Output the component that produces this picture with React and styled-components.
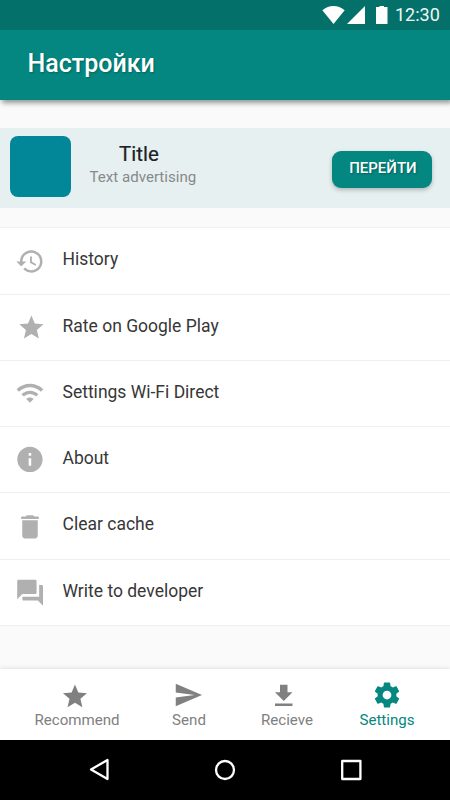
import React from 'react';
import styled, { createGlobalStyle } from 'styled-components';

const GlobalStyle = createGlobalStyle`
  * {
    box-sizing: border-box;
  }

  body {
    margin: 0;
    background: #fafafa;
    font-family: Roboto, 'Liberation Sans', sans-serif;
  }
`;

const Screen = styled.div`
  width: 450px;
  height: 800px;
  display: flex;
  flex-direction: column;
  background: #fafafa;
  overflow: hidden;
`;

const StatusBar = styled.div`
  height: 30px;
  flex-shrink: 0;
  display: flex;
  justify-content: flex-end;
  padding-right: 10px;
  background: #04706a;
  color: #fff;
`;

const StatusIcons = styled.svg`
  width: 68px;
  height: 30px;
  margin-right: 6.5px;
  fill: #fff;
`;

const Clock = styled.span`
  width: 45px;
  font-size: 18px;
  line-height: 30px;
  color: #f0f7f6;
  white-space: nowrap;
`;

const AppBar = styled.header`
  height: 70px;
  flex-shrink: 0;
  padding-left: 27.5px;
  background: #048780;
  box-shadow: 2px 3px 5px rgba(0, 0, 0, 0.4);
  clip-path: inset(0 0 -12px 0);
`;

const PageTitle = styled.h1`
  margin: 0;
  font-size: 25px;
  font-weight: 500;
  line-height: 67px;
  color: #fff;
  text-shadow: 1px 1px 2px rgba(0, 0, 0, 0.25);
`;

const Banner = styled.section`
  height: 80px;
  flex-shrink: 0;
  margin: 28px 0 20.4px;
  padding: 0 18px 0 10px;
  display: flex;
  align-items: flex-start;
  background: #e7f0f1;
`;

const Thumb = styled.div`
  width: 61px;
  height: 61px;
  margin-top: 8.4px;
  border-radius: 8px;
  background: #018798;
`;

const BannerText = styled.div`
  margin: 14px auto 0 18.5px;
`;

const BannerTitle = styled.h2`
  margin: 0 0 0 29.5px;
  font-size: 20.5px;
  font-weight: 400;
  line-height: 24px;
  color: #212121;
  -webkit-text-stroke: 0.2px #212121;
`;

const BannerCaption = styled.p`
  margin: 2px 0 0;
  font-size: 15.1px;
  line-height: 18px;
  color: #868a8a;
`;

const GoButton = styled.button`
  width: 100px;
  height: 37px;
  margin-top: 23.3px;
  margin-right: -0.4px;
  padding: 0 0 4px 1px;
  border: 0;
  border-radius: 9px;
  background: #048780;
  box-shadow: 0 2px 4px rgba(0, 0, 0, 0.25);
  font-family: inherit;
  font-size: 15px;
  font-weight: 500;
  color: #fff;
  text-shadow: 1px 1px 2px rgba(0, 0, 0, 0.3);
`;

const List = styled.ul`
  margin: 0;
  padding: 0;
  list-style: none;
  box-shadow: 0 -1px 0 #f2f2f2;
`;

const ListRow = styled.li`
  height: 66.25px;
  display: flex;
  align-items: center;
  padding-left: 15px;
  background: #fff;
  border-bottom: 1px solid #efefef;
`;

const RowIcon = styled.svg`
  width: 31px;
  height: 31px;
  margin-right: 16.5px;
  overflow: visible;
  fill: #b0b0b0;
`;

const RowLabel = styled.span`
  padding-bottom: 3.4px;
  font-size: 17.5px;
  color: #373737;
`;

const BottomNav = styled.nav`
  height: 71px;
  flex-shrink: 0;
  margin-top: auto;
  padding: 0 20px 0 30px;
  display: flex;
  background: #fff;
  box-shadow: 0 -1px 4px rgba(0, 0, 0, 0.1);
`;

const NavItem = styled.a`
  width: ${({ $width }) => $width}px;
  margin-left: ${({ $gap }) => $gap || 0}px;
  padding-top: 11px;
  display: flex;
  flex-direction: column;
  align-items: center;
  color: ${({ $active }) => ($active ? '#048780' : '#808080')};
  font-size: 15.1px;
  line-height: 18px;
`;

const NavIcon = styled.svg`
  width: 30px;
  height: 30px;
  margin-bottom: 1px;
  fill: currentColor;
`;

const SystemBar = styled.div`
  height: 60px;
  flex-shrink: 0;
  display: flex;
  align-items: center;
  justify-content: center;
  gap: 96px;
  background: #000;
`;

const SystemIcon = styled.svg`
  width: 30px;
  height: 30px;
  fill: none;
  stroke: #fff;
  stroke-width: 2.3;
  stroke-linejoin: round;
`;

const STAR = 'M12 17.27L18.18 21l-1.64-7.03L22 9.24l-7.19-.61L12 2 9.19 8.63 2 9.24l5.46 4.73L5.82 21z';

const rows = [
  {
    label: 'History',
    viewBox: '0 -0.3 24.8 24.8',
    path: 'M13 3c-4.97 0-9 4.03-9 9H1l3.89 3.89.07.14L9 12H6c0-3.87 3.13-7 7-7s7 3.13 7 7-3.13 7-7 7c-1.93 0-3.68-.79-4.94-2.06l-1.42 1.42C8.27 19.99 10.51 21 13 21c4.97 0 9-4.03 9-9s-4.03-9-9-9zm-1 5v5l4.28 2.54.72-1.21-3.5-2.08V8H12z',
  },
  { label: 'Rate on Google Play', viewBox: '-1.6 -0.9 25.7 25.7', path: STAR },
  {
    label: 'Settings Wi-Fi Direct',
    viewBox: '-0.3 -0.3 25.5 25.5',
    path: 'M1 9l2 2c4.97-4.97 13.03-4.97 18 0l2-2C16.93 2.93 7.08 2.93 1 9zm8 8l3 3 3-3c-1.65-1.66-4.34-1.66-6 0zm-4-4l2 2c2.76-2.76 7.24-2.76 10 0l2-2C15.14 9.14 8.87 9.14 5 13z',
  },
  {
    label: 'About',
    viewBox: '0.2 -0.2 24.5 24.5',
    path: 'M12 2C6.48 2 2 6.48 2 12s4.48 10 10 10 10-4.48 10-10S17.52 2 12 2zm1 15h-2v-6h2v6zm0-8h-2V7h2v2z',
  },
  {
    label: 'Clear cache',
    viewBox: '0.4 -0.2 24 24',
    path: 'M6 19c0 1.1.9 2 2 2h8c1.1 0 2-.9 2-2V7H6v12zM18.3 4h-2.8c-.6-.7-1.2-1-2-1h-3c-.8 0-1.4.3-2 1H5.7c-.9 0-.9 2 0 2h12.6c.9 0 .9-2 0-2z',
  },
  {
    label: 'Write to developer',
    viewBox: '0.3 -0.2 24 24',
    path: 'M21 6h-2v9H6v2c0 .55.45 1 1 1h11l4 4V7c0-.55-.45-1-1-1zm-4 6V3c0-.55-.45-1-1-1H3c-.55 0-1 .45-1 1v14l4-4h10c.55 0 1-.45 1-1z',
  },
];

const tabs = [
  { label: 'Recommend', width: 94, viewBox: '1.2 -1.7 25 25', path: STAR },
  {
    label: 'Send',
    width: 50,
    gap: 40,
    viewBox: '0.6 0 24 24',
    path: 'M2.01 21L23 12 2.01 3 2 10l15 2-15 2z',
  },
  {
    label: 'Recieve',
    width: 60,
    gap: 43,
    viewBox: '2.6 -0.8 24 24',
    path: 'M19 9h-4V3H9v6H5l7 7 7-7zM5 18v2h14v-2H5z',
  },
  {
    label: 'Settings',
    width: 60,
    gap: 40,
    active: true,
    viewBox: '0 0 24 24',
    path: 'M19.43 12.98c.04-.32.07-.64.07-.98s-.03-.66-.07-.98l2.11-1.65c.19-.15.24-.42.12-.64l-2-3.46c-.12-.22-.39-.3-.61-.22l-2.49 1c-.52-.4-1.08-.73-1.69-.98l-.38-2.65C14.46 2.18 14.25 2 14 2h-4c-.25 0-.46.18-.49.42l-.38 2.65c-.61.25-1.17.59-1.69.98l-2.49-1c-.23-.09-.49 0-.61.22l-2 3.46c-.13.22-.07.49.12.64l2.11 1.65c-.04.32-.07.65-.07.98s.03.66.07.98l-2.11 1.65c-.19.15-.24.42-.12.64l2 3.46c.12.22.39.3.61.22l2.49-1c.52.4 1.08.73 1.69.98l.38 2.65c.03.24.24.42.49.42h4c.25 0 .46-.18.49-.42l.38-2.65c.61-.25 1.17-.59 1.69-.98l2.49 1c.23.09.49 0 .61-.22l2-3.46c.12-.22.07-.49-.12-.64l-2.11-1.65zM12 15.5c-1.93 0-3.5-1.57-3.5-3.5s1.57-3.5 3.5-3.5 3.5 1.57 3.5 3.5-1.57 3.5-3.5 3.5z',
  },
];

const App = () => {
  return (
    <>
      <GlobalStyle />
      <Screen>
        <StatusBar>
          <StatusIcons viewBox="320 0 68 30">
            <path d="M321.3 10.3C328 4.6 337 4.6 343.7 10.3L332.5 24z" />
            <path d="M364 6v18h-18z" />
            <path d="M375 7h3.5V6h4.5v1h3.5v17H375z" />
          </StatusIcons>
          <Clock>12:30</Clock>
        </StatusBar>
        <AppBar>
          <PageTitle>Настройки</PageTitle>
        </AppBar>

        <Banner>
          <Thumb />
          <BannerText>
            <BannerTitle>Title</BannerTitle>
            <BannerCaption>Text advertising</BannerCaption>
          </BannerText>
          <GoButton>ПЕРЕЙТИ</GoButton>
        </Banner>

        <List>
          {rows.map((row) => (
            <ListRow key={row.label}>
              <RowIcon viewBox={row.viewBox}>
                <path d={row.path} />
              </RowIcon>
              <RowLabel>{row.label}</RowLabel>
            </ListRow>
          ))}
        </List>

        <BottomNav>
          {tabs.map((tab) => (
            <NavItem key={tab.label} $width={tab.width} $gap={tab.gap} $active={tab.active}>
              <NavIcon viewBox={tab.viewBox}>
                <path d={tab.path} />
              </NavIcon>
              {tab.label}
            </NavItem>
          ))}
        </BottomNav>

        <SystemBar>
          <SystemIcon viewBox="0 0 30 30">
            <path d="M7 14.5L23.5 5v19z" />
          </SystemIcon>
          <SystemIcon viewBox="0 0 30 30">
            <circle cx="15" cy="15" r="9" />
          </SystemIcon>
          <SystemIcon viewBox="0 0 30 30">
            <rect x="6.2" y="6" width="18.2" height="18" />
          </SystemIcon>
        </SystemBar>
      </Screen>
    </>
  );
};

export default App;
